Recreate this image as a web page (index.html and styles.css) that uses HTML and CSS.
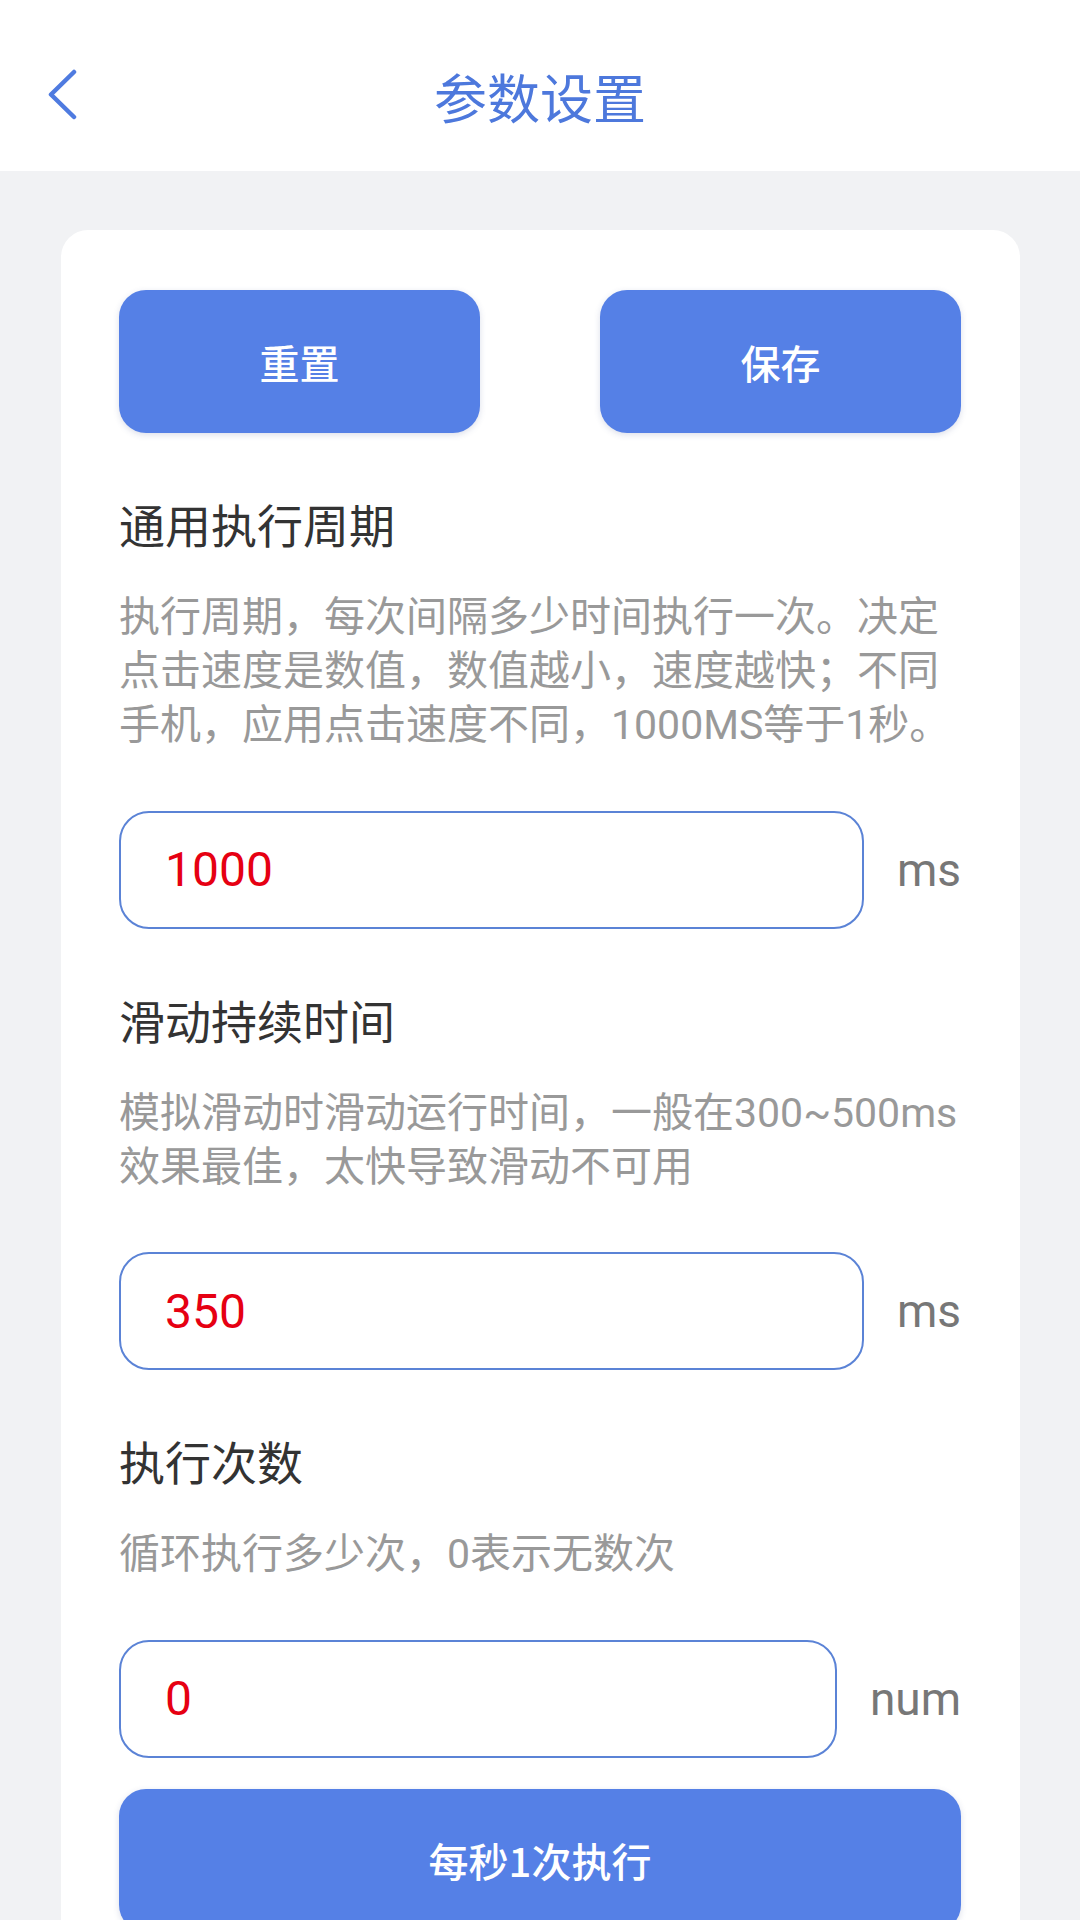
FILE: index.html
```html
<!DOCTYPE html>
<html lang="zh-CN">
<head>
<meta charset="utf-8">
<title>参数设置</title>
<link rel="stylesheet" href="styles.css">
</head>
<body>
<header class="topbar">
  <div class="back">
    <svg class="back-icon" viewBox="0 0 32 54" width="32" height="54">
      <polyline points="28,3 5,25.5 28,48" fill="none" stroke="#4f7be0" stroke-width="4.5" stroke-linecap="round" stroke-linejoin="round"/>
    </svg>
  </div>
  <h1 class="title">参数设置</h1>
  <div></div>
</header>
<main class="card">
  <div class="actions">
    <button class="btn">重置</button>
    <button class="btn">保存</button>
  </div>

  <section class="section">
    <h2 class="label">通用执行周期</h2>
    <p class="desc">执行周期，每次间隔多少时间执行一次。决定点击速度是数值，数值越小，速度越快；不同手机，应用点击速度不同，1000MS等于1秒。</p>
    <div class="field">
      <input class="input" type="text" value="1000" readonly>
      <span class="unit">ms</span>
    </div>
  </section>

  <section class="section">
    <h2 class="label">滑动持续时间</h2>
    <p class="desc">模拟滑动时滑动运行时间，一般在300~500ms<br>效果最佳，太快导致滑动不可用</p>
    <div class="field">
      <input class="input" type="text" value="350" readonly>
      <span class="unit">ms</span>
    </div>
  </section>

  <section class="section">
    <h2 class="label">执行次数</h2>
    <p class="desc">循环执行多少次，0表示无数次</p>
    <div class="field">
      <input class="input" type="text" value="0" readonly>
      <span class="unit">num</span>
    </div>
  </section>

  <button class="btn btn-wide">每秒1次执行</button>
</main>
</body>
</html>
```
FILE: styles.css
```css
* { box-sizing: border-box; }
html, body {
  margin: 0;
  padding: 0;
}
body {
  background: #f1f2f4;
  font-family: Roboto, "Noto Sans CJK SC", sans-serif;
  width: 1080px;
  min-height: 1920px;
  overflow: hidden;
}
.topbar {
  height: 171px;
  background: #ffffff;
  padding-top: 20px;
  display: grid;
  grid-template-columns: 1fr auto 1fr;
  align-items: center;
}
.back {
  padding-left: 46px;
  display: flex;
  align-items: center;
}
.back-icon { display: block; }
.title {
  margin: 0;
  font-size: 53px;
  line-height: 70px;
  font-weight: 400;
  color: #4d78dc;
  font-family: "Noto Sans CJK SC", sans-serif;
}
.card {
  margin: 59px 60px 0 61px;
  background: #ffffff;
  border-radius: 27px;
  padding: 60px 59px 40px 58px;
}
.actions {
  display: flex;
  justify-content: space-between;
}
.btn {
  border: none;
  background: #5580e6;
  color: #ffffff;
  border-radius: 27px;
  width: 361px;
  height: 143px;
  font-family: "Noto Sans CJK SC", sans-serif;
  font-size: 40px;
  font-weight: 500;
  box-shadow: 0 2px 6px rgba(60, 80, 140, 0.18);
  padding: 0;
}
.btn-wide {
  width: 100%;
  margin-top: 31px;
  display: block;
}
.section {
  margin-top: 64px;
}
.label {
  margin: 0;
  font-size: 46px;
  line-height: 60px;
  font-weight: 400;
  color: #333333;
}
.desc {
  margin: 33px 0 0 0;
  font-size: 41px;
  line-height: 54px;
  color: #999999;
}
.field {
  margin-top: 58.5px;
  display: flex;
  align-items: center;
  gap: 33px;
}
.input {
  flex: 1;
  min-width: 0;
  height: 118px;
  border: 2px solid #5b83d6;
  border-radius: 30px;
  padding: 0 0 0 44px;
  font-family: Roboto, sans-serif;
  font-size: 48px;
  color: #e60012;
  background: #ffffff;
  outline: none;
}
.unit {
  font-size: 46px;
  color: #777777;
  line-height: 60px;
}
```
